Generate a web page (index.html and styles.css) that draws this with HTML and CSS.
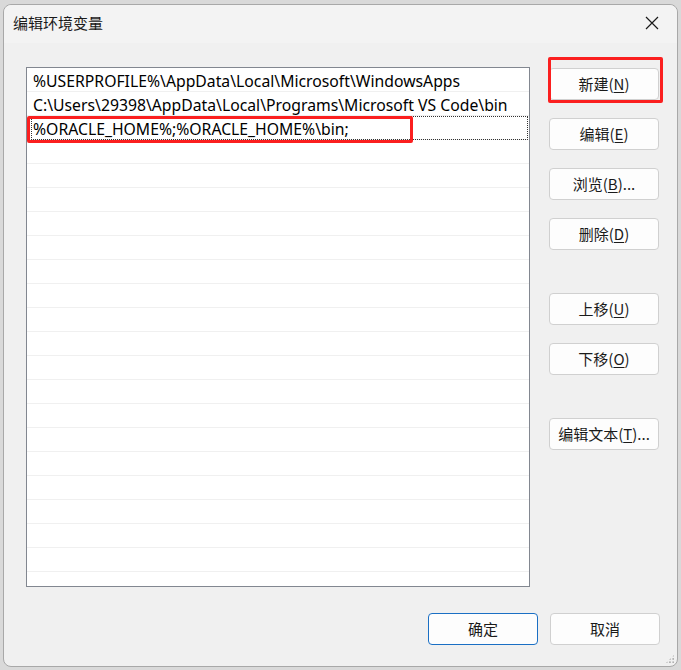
FILE: index.html
```html
<!DOCTYPE html>
<html lang="zh-CN">
<head>
<meta charset="utf-8">
<title>编辑环境变量</title>
<link rel="stylesheet" href="styles.css">
</head>
<body>
<div class="window">
  <div class="titlebar">
    <span class="title">编辑环境变量</span>
    <span class="close">
      <svg width="14" height="14" viewBox="0 0 14 14"><path d="M1 1L13 13M13 1L1 13" stroke="#1a1a1a" stroke-width="1.2" fill="none"/></svg>
    </span>
  </div>
  <div class="content">
    <div class="list">
      <div class="row">%USERPROFILE%\AppData\Local\Microsoft\WindowsApps</div>
      <div class="row">C:\Users\29398\AppData\Local\Programs\Microsoft VS Code\bin</div>
      <div class="row focus">%ORACLE_HOME%;%ORACLE_HOME%\bin;<span class="mark mark-row"></span></div>
      <div class="row"></div><div class="row"></div><div class="row"></div><div class="row"></div>
      <div class="row"></div><div class="row"></div><div class="row"></div><div class="row"></div>
      <div class="row"></div><div class="row"></div><div class="row"></div><div class="row"></div>
      <div class="row"></div><div class="row"></div><div class="row"></div><div class="row"></div>
      <div class="row"></div><div class="row"></div><div class="row"></div>
    </div>
    <div class="side">
      <div class="group g1">
        <button class="btn">新建(<u>N</u>)</button>
        <span class="mark mark-btn"></span>
        <button class="btn">编辑(<u>E</u>)</button>
        <button class="btn">浏览(<u>B</u>)...</button>
        <button class="btn">删除(<u>D</u>)</button>
      </div>
      <div class="group g2">
        <button class="btn">上移(<u>U</u>)</button>
        <button class="btn">下移(<u>O</u>)</button>
      </div>
      <div class="group g3">
        <button class="btn">编辑文本(<u>T</u>)...</button>
      </div>
    </div>
  </div>
  <div class="footer">
    <button class="btn primary">确定</button>
    <button class="btn">取消</button>
  </div>
  <span class="grip"></span>
</div>
</body>
</html>
```
FILE: styles.css
```css
* { box-sizing: border-box; }
html, body { margin: 0; padding: 0; }
body {
  width: 681px;
  height: 670px;
  background: #d9d9d9;
  font-family: "Noto Sans", "Noto Sans CJK SC", sans-serif;
  overflow: hidden;
  padding: 4px 3px 3px 3px;
}
.window {
  position: relative;
  width: 675px;
  height: 663px;
  background: #f0f0f0;
  border: 1px solid #a8a8a8;
  border-radius: 8px;
  display: flex;
  flex-direction: column;
}
.titlebar {
  height: 38px;
  display: flex;
  align-items: center;
  justify-content: space-between;
  padding: 0 18px 0 9px;
  background: #f3f3f3;
  border-radius: 8px 8px 0 0;
}
.title {
  font-family: "Noto Sans CJK SC", sans-serif;
  font-size: 15px;
  color: #1a1a1a;
  margin-top: -4px;
}
.close { display: flex; margin-top: -3px; }
.content {
  display: flex;
  padding: 24px 0 0 22px;
  gap: 19px;
}
.list {
  width: 504px;
  height: 520px;
  background: #fff;
  border: 1px solid #828790;
  overflow: hidden;
}
.row {
  position: relative;
  height: 24px;
  border-bottom: 1px solid #f0f0f0;
  padding-left: 6px;
  padding-top: 2px;
  font-family: "Noto Sans", sans-serif;
  font-size: 15.75px;
  line-height: 23px;
  color: #000;
  white-space: nowrap;
}
.row.focus {
  outline: 1px dotted #333;
  outline-offset: -1px;
  margin-left: 4px;
  padding-left: 2px;
  margin-right: 1px;
}
.mark {
  position: absolute;
  border: 3px solid #fb1f1f;
  border-radius: 2px;
  pointer-events: none;
}
.mark-row {
  left: -4px;
  top: 0;
  width: 386px;
  height: 27px;
}
.side { display: flex; flex-direction: column; }
.group { position: relative; display: flex; flex-direction: column; gap: 18px; }
.g1 { margin-top: 1px; }
.g2 { margin-top: 43px; }
.g3 { margin-top: 43px; }
.btn {
  width: 110px;
  height: 32px;
  background: #fdfdfd;
  border: 1px solid #d0d0d0;
  border-radius: 4px;
  font-family: "Noto Sans CJK SC", sans-serif;
  font-size: 15px;
  color: #1a1a1a;
  padding: 0 0 2px 0;
}
.btn u { text-underline-offset: 2px; }
.mark-btn {
  left: -1px;
  top: -11px;
  width: 115px;
  height: 46px;
  border-width: 3px;
}
.footer {
  display: flex;
  justify-content: flex-end;
  gap: 12px;
  padding: 26px 17px 0 0;
}
.btn.primary { border-color: #1a6fc4; }
.grip {
  position: absolute;
  right: 2px;
  bottom: 2px;
  width: 10px;
  height: 10px;
  background-image: radial-gradient(circle, #b0b0b0 1px, transparent 1.2px);
  background-size: 3.3px 3.3px;
  clip-path: polygon(100% 0, 100% 100%, 0 100%);
}
```
